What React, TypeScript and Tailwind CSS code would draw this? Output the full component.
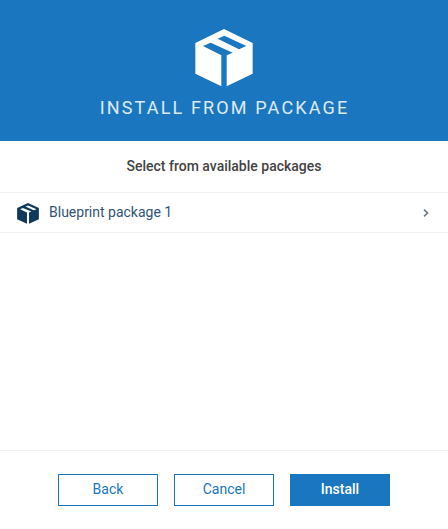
function PackageIcon({ className }: { className: string }) {
  return (
    <svg viewBox="0 0 174 174" preserveAspectRatio="none" className={className} fill="currentColor" fillRule="evenodd" aria-hidden="true">
      <path d="M87 0 173 42V134L95 172V79L113 71 47 41 24 51 79 79V172L1 134V42ZM88 20 68 29 132 61 154 51Z" />
    </svg>
  );
}

export default function App() {
  return (
    <div className="flex h-[529px] w-[448px] flex-col bg-white font-[Roboto,sans-serif] text-sm">
      <header className="flex h-[141px] flex-col items-center bg-[#1976bf] pt-[29px] text-white">
        <PackageIcon className="size-[58px]" />
        <h1 className="mt-[7px] pl-px text-lg leading-7 font-normal tracking-[2.15px] whitespace-nowrap text-white/85">INSTALL FROM PACKAGE</h1>
      </header>
      <h2 className="flex h-[51px] items-center justify-center pb-[2px] font-medium text-[#444]">
        Select from available packages
      </h2>
      <main className="flex-1">
        <button className="flex h-[41px] w-full items-center border-y border-[#f0f0f0] pr-[19px] pl-[17px] text-[#10395f]">
          <PackageIcon className="mt-px h-[21px] w-[22px]" />
          <span className="ml-[10px] flex-1 pb-[2px] text-left text-[#315575]">Blueprint package 1</span>
          <svg viewBox="0 0 6 8" className="mt-px h-2 w-1.5" fill="none" stroke="#6c7a83" strokeWidth="1.6" aria-hidden="true">
            <path d="m1 .7 3.5 3.3L1 7.3" />
          </svg>
        </button>
      </main>
      <footer className="flex h-[79px] items-start justify-center gap-4 border-t border-[#f0f0f0] pt-[23px]">
        <button className="h-8 w-[100px] border border-[#1976bf] pb-[2px] text-[#1976bf]">Back</button>
        <button className="h-8 w-[100px] border border-[#1976bf] pb-[2px] text-[#1976bf]">Cancel</button>
        <button className="h-8 w-[100px] border border-[#1976bf] bg-[#1976bf] pb-[2px] font-medium text-white">Install</button>
      </footer>
    </div>
  );
}
